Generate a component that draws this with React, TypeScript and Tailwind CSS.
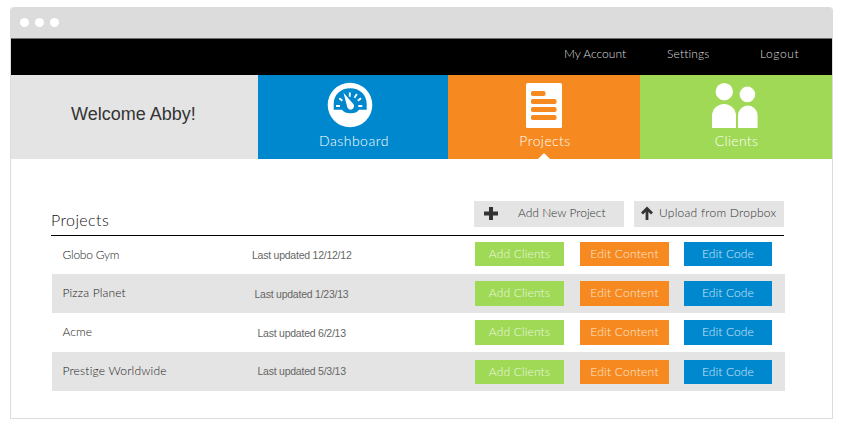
const rows = [
  { name: 'Globo Gym', date: '12/12/12', nameCls: 'tracking-[-0.25px] pb-px', dateCls: 'pl-[200.5px] pb-px', h: 'h-[38px]', pad: 'pt-[6px]', btn: 'h-6', bg: '' },
  { name: 'Pizza Planet', date: '1/23/13', nameCls: 'tracking-[0.15px] pb-px', dateCls: 'pl-[203px]', h: 'h-[39px]', pad: 'pt-[7px]', btn: 'h-[25px]', bg: 'bg-[#e4e4e4]' },
  { name: 'Acme', date: '6/2/13', nameCls: 'tracking-[0.1px] pb-[2px]', dateCls: 'pl-[206px] pt-px', h: 'h-[39px]', pad: 'pt-[7px]', btn: 'h-[25px]', bg: '' },
  { name: 'Prestige Worldwide', date: '5/3/13', nameCls: 'tracking-[0.2px] pb-[2px]', dateCls: 'pl-[206px] pb-[2px]', h: 'h-[39px]', pad: 'pt-[8px]', btn: 'h-6', bg: 'bg-[#e4e4e4]' },
];

const geo = "font-['Lato','Open_Sans',sans-serif] font-light whitespace-nowrap";
const arial = "font-['Liberation_Sans',Arial,sans-serif] whitespace-nowrap";

function Gauge() {
  return (
    <svg width="46" height="46" viewBox="0 0 46 46">
      <circle cx="23" cy="23" r="22.3" fill="#fff" />
      <path d="M6.700 27.700V22C6.700 12.500 14 6.300 23.200 6.300S39.700 12.500 39.700 22V27.700H32C30.500 30 27.500 31.300 23.500 31.300S16.500 30 15 27.700Z" fill="#0088ce" />
      <path d="M16.500 10.800 25.900 21.500a3.500 3.500 0 1 1-5.800 3Z" fill="#fff" />
      <g stroke="#fff" strokeWidth="1.9">
        <path d="M9 24h4M31.300 24h4M12.300 16.200l3 2.600M22.800 10.600v4.200M29.900 12.100l-2.400 3.700M34 16.200l-3.200 2.600" />
      </g>
    </svg>
  );
}

function Document() {
  return (
    <svg width="36" height="45" viewBox="0 0 36 45">
      <rect width="36" height="45" rx="1.5" fill="#fff" />
      <g fill="#f6891f">
        <rect x="5" y="8" width="14.5" height="5" rx="1.8" />
        <rect x="5" y="16" width="25.5" height="5" rx="1.8" />
        <rect x="5" y="24" width="25.5" height="5" rx="1.8" />
        <rect x="5" y="32" width="25.5" height="5" rx="1.8" />
      </g>
    </svg>
  );
}

function People() {
  return (
    <svg className="-ml-[2px]" width="46" height="45" viewBox="0 0 46 45" fill="#fff">
      <circle cx="12.3" cy="8.7" r="8.7" />
      <path d="M0 45V33a12 12 0 0 1 24 0v12Z" />
      <circle cx="35.4" cy="11.4" r="7.8" />
      <path d="M26 45V32.5a9.8 10 0 0 1 19.6 0V45Z" />
    </svg>
  );
}

export default function App() {
  return (
    <div className="h-[429px] w-[843px] overflow-hidden bg-white pl-[10px] pt-[7px]">
      <div className="h-[412px] w-[823px] overflow-hidden rounded-t-[4px] border-x border-b border-[#dcdcdc]">
        <div className="flex h-8 items-center gap-[6px] border-b border-[#707070] bg-[#dcdcdc] pl-[8.5px]">
          <i className="size-[9px] rounded-full bg-white" />
          <i className="size-[9px] rounded-full bg-white" />
          <i className="size-[9px] rounded-full bg-white" />
        </div>
        <nav className={`flex h-9 justify-end bg-black pt-[7px] text-[12px] leading-4 text-[#dedede] ${geo}`}>
          <span className="w-[103px]">My Account</span>
          <span className="w-[93px] tracking-[0.15px]">Settings</span>
          <span className="w-[72px] tracking-[0.6px]">Logout</span>
        </nav>
        <div className="flex h-[84px]">
          <div className={`w-[247px] bg-[#e4e4e4] pl-[60px] pt-[28px] text-[18px] leading-[22px] text-[#333] ${arial}`}>Welcome Abby!</div>
          <div className="flex w-[190px] flex-col items-center bg-[#0088ce] pt-[7px] pr-[6px]">
            <Gauge />
            <span className={`mt-[5px] pl-[8px] text-[14px] leading-4 text-white tracking-[0.5px] ${geo}`}>Dashboard</span>
          </div>
          <div className="flex w-[192px] flex-col items-center bg-[#f6891f] pt-[8px]">
            <Document />
            <span className={`mt-[5px] pl-[2px] text-[14px] leading-4 text-white tracking-[0.4px] ${geo}`}>Projects</span>
            <svg className="mt-[4px] block" width="12" height="6" viewBox="0 0 12 6"><path d="M6 0 12 6H0Z" fill="#fff" /></svg>
          </div>
          <div className="flex w-[192px] flex-col items-center bg-[#9fd955] pt-[8px]">
            <People />
            <span className={`mt-[5px] pl-px text-[14px] leading-4 text-white tracking-[0.3px] ${geo}`}>Clients</span>
          </div>
        </div>
        <main className="pl-[40px] pt-[42px]">
          <div className="flex h-[35px] w-[733px] border-b border-black">
            <h1 className={`w-[423px] pt-[9px] text-[16px] leading-5 text-[#111] tracking-[0.4px] ${geo}`}>Projects</h1>
            <div className={`flex h-[26px] w-[150px] bg-[#e4e4e4] pl-[10px] pt-[4px] text-[12px] leading-4 text-[#333] ${geo}`}>
              <svg className="mr-[20px] mt-px block" width="14" height="16" viewBox="0 0 14 16"><path d="M7 1v13M0 7.5h14" stroke="#333" strokeWidth="4" /></svg>
              <span>Add New Project</span>
            </div>
            <div className={`ml-[10px] flex h-[26px] w-[150px] bg-[#e4e4e4] pl-[7px] pt-[4px] text-[12px] leading-4 text-[#333] ${geo}`}>
              <svg className="mr-[6px] mt-px block" width="12" height="16" viewBox="0 0 12 16" fill="none"><path d="M6 14V3M1 7.5 6 2.5l5 5" stroke="#333" strokeWidth="2.8" /></svg>
              <span className="tracking-[0.25px]">Upload from Dropbox</span>
            </div>
          </div>
          <div className="ml-px w-[733px]">
            {rows.map((r) => (
              <div key={r.name} className={`flex ${r.h} ${r.bg}`}>
                <div className="flex w-[423px] items-center text-[12px] leading-4">
                  <span className={`w-0 pl-[10.5px] text-[#222] ${r.nameCls} ${geo}`}>{r.name}</span>
                  <span className={`text-[10.5px] tracking-[-0.24px] text-[#666] ${r.dateCls} ${arial}`}><span className="-ml-[11px]">Last updated {r.date}</span></span>
                </div>
                <div className={`flex gap-[16px] text-center text-[12px] leading-[23px] text-white/80 ${r.pad} ${geo}`}>
                  <span className={`w-[89px] bg-[#9fd955] ${r.btn} tracking-[0.15px]`}>Add Clients</span>
                  <span className={`w-[89px] bg-[#f6891f] ${r.btn} tracking-[0.25px]`}>Edit Content</span>
                  <span className={`-ml-px w-[88px] bg-[#0088ce] ${r.btn} tracking-[0.1px]`}>Edit Code</span>
                </div>
              </div>
            ))}
          </div>
        </main>
      </div>
    </div>
  );
}
